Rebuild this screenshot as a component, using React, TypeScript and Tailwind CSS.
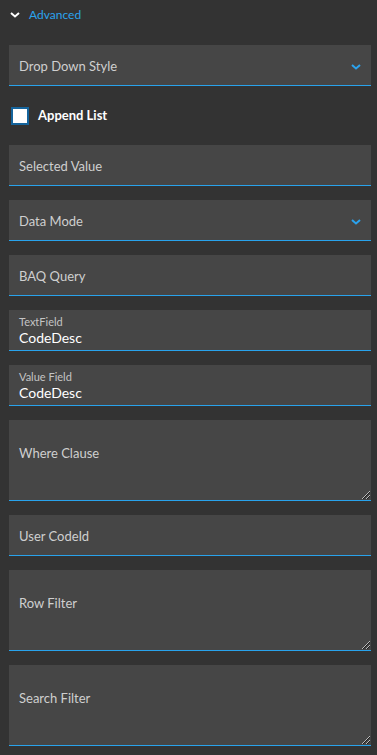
import { ReactNode } from "react";

const font = { fontFamily: "Lato, 'Open Sans', sans-serif" };

function Chevron({ className }: { className: string }) {
  return (
    <svg viewBox="0 0 10 6" className={className} fill="none">
      <path d="M1 1l4 3.5L9 1" stroke="currentColor" strokeWidth="2" />
    </svg>
  );
}

function Grip() {
  return (
    <svg viewBox="0 0 9 9" className="absolute right-[1px] bottom-[1px] h-[9px] w-[9px]">
      <path d="M1 9L9 1M5 9L9 5" stroke="#bdbdbd" strokeWidth="1" />
      <path d="M2 9L9 2M6 9L9 6" stroke="#1c1c1c" strokeWidth="1" />
    </svg>
  );
}

function Field({ label, dropdown }: { label: string; dropdown?: boolean }) {
  return (
    <div className="flex h-[41px] items-center justify-between border-b border-b-[#29a3ec] bg-[#464646] px-[10px] pt-[4px]">
      <span className="text-[13px] text-[#cfcfcf]">{label}</span>
      {dropdown && <Chevron className="h-[6px] w-[10px] text-[#2ba3ee]" />}
    </div>
  );
}

function FilledField({ label, value }: { label: string; value: string }) {
  return (
    <div className="flex h-[41px] flex-col justify-center border-b border-b-[#29a3ec] bg-[#464646] px-[10px]">
      <span className="text-[11px] leading-[14px] text-[#c4c4c4]">{label}</span>
      <span className="text-[14px] leading-[17px] text-white">{value}</span>
    </div>
  );
}

function Area({ label }: { label: string }) {
  return (
    <div className="relative h-[81px] border-b border-b-[#29a3ec] bg-[#464646] px-[10px] pt-[20px]">
      <span className="text-[13px] text-[#cfcfcf]">{label}</span>
      <Grip />
    </div>
  );
}

function Gap({ children }: { children: ReactNode }) {
  return <div className="flex flex-col gap-[14px]">{children}</div>;
}

export default function App() {
  return (
    <div className="min-h-[755px] w-[377px] bg-[#333333]" style={font}>
      <div className="flex h-[30px] items-center gap-[9px] pl-[10px]">
        <Chevron className="h-[6px] w-[10px] text-white" />
        <span className="text-[12px] text-[#2ba3ee]">Advanced</span>
      </div>
      <div className="pl-[9px] pr-[6px] pt-[15px]">
        <Field label="Drop Down Style" dropdown />
        <div className="flex h-[59px] items-center gap-[9px] pl-[2px]">
          <div className="h-[18px] w-[18px] border-2 border-[#15649c] bg-white" />
          <span className="text-[13px] font-bold text-white">Append List</span>
        </div>
        <Gap>
          <Field label="Selected Value" />
          <Field label="Data Mode" dropdown />
          <Field label="BAQ Query" />
          <FilledField label="TextField" value="CodeDesc" />
          <FilledField label="Value Field" value="CodeDesc" />
          <Area label="Where Clause" />
          <Field label="User CodeId" />
          <Area label="Row Filter" />
          <Area label="Search Filter" />
        </Gap>
      </div>
    </div>
  );
}
